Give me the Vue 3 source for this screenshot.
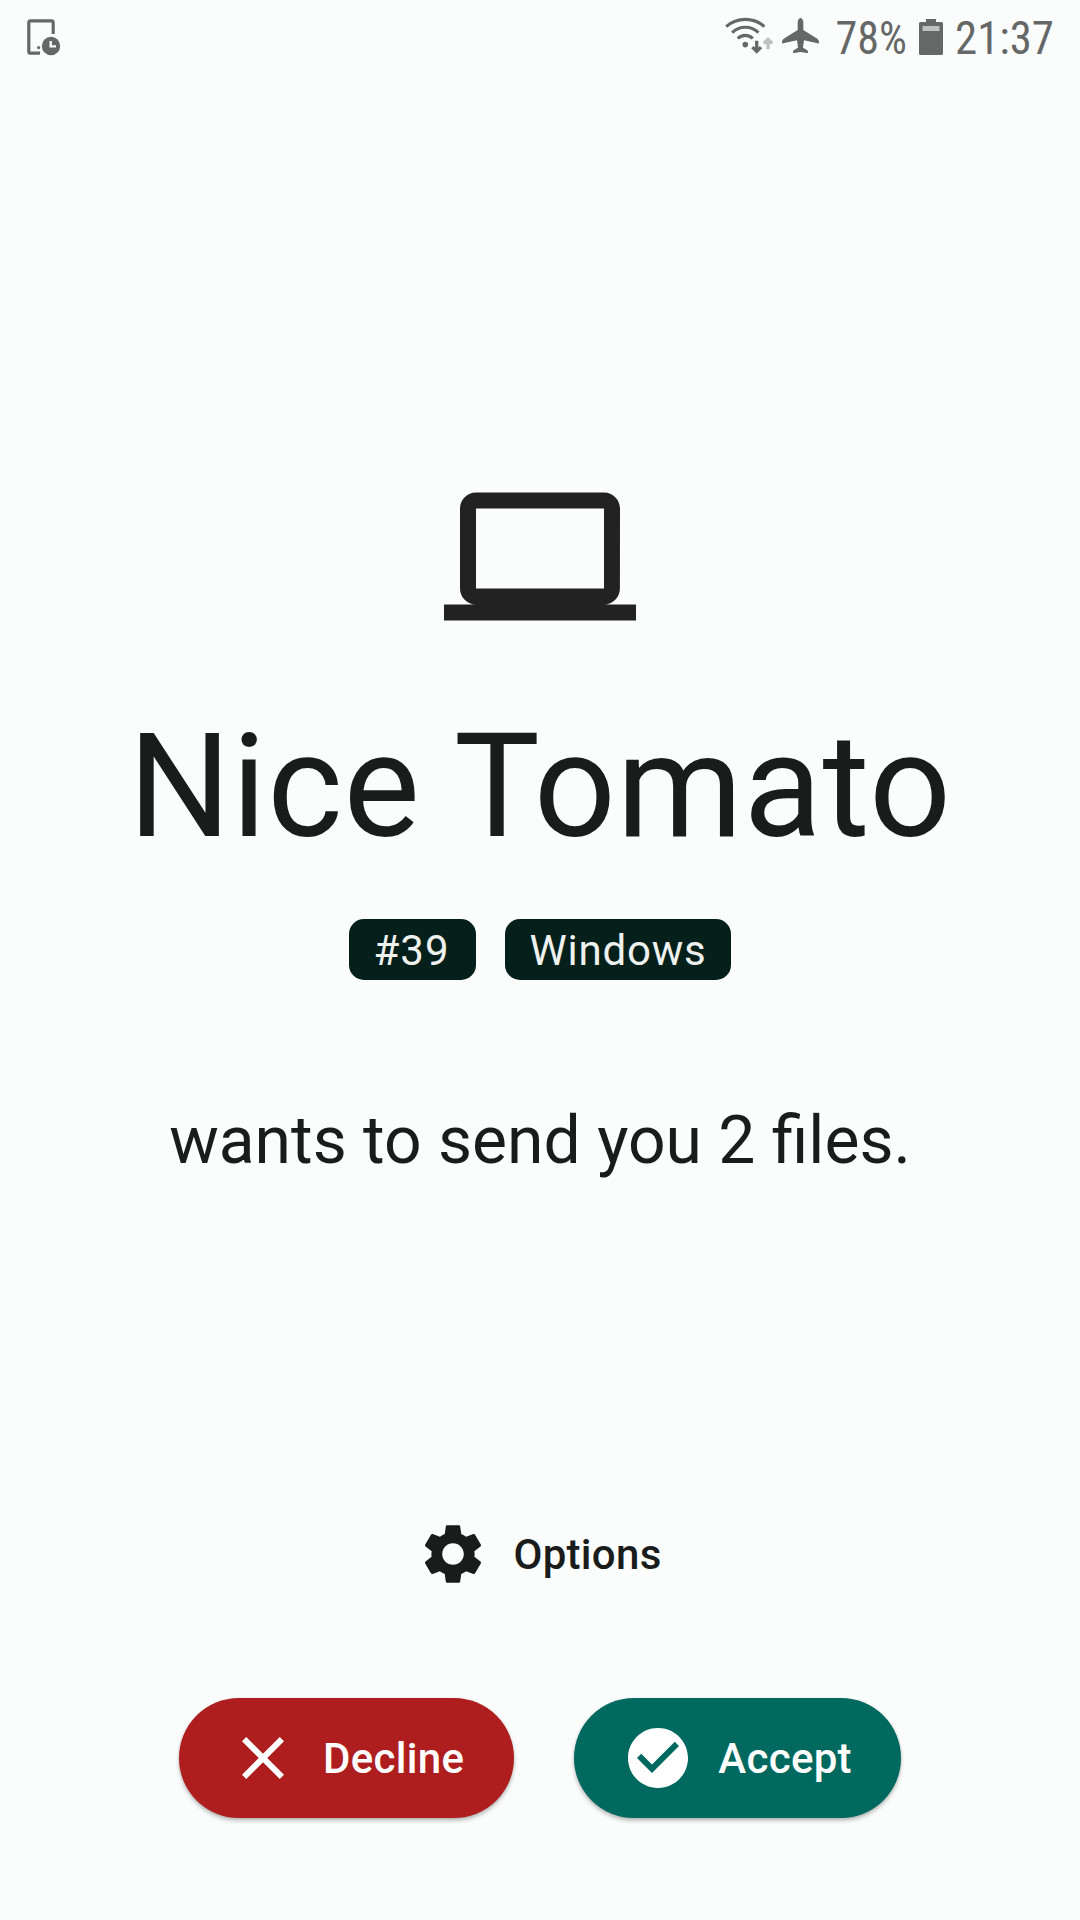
<script setup>
const badges = ['#39', 'Windows']
</script>

<template>
  <div class="screen">
    <header class="status">
      <svg class="device" width="36" height="38" viewBox="0 0 36 38">
        <path d="M26.2 15V3.6Q26.2 1.8 24.4 1.8H3.6Q1.8 1.8 1.8 3.6V32.4Q1.8 34.2 3.6 34.2H13" fill="none" stroke="currentColor" stroke-width="3.2" />
        <circle cx="11.6" cy="28.6" r="1.6" fill="currentColor" />
        <circle cx="24" cy="27" r="9.2" fill="currentColor" />
        <path d="M23.7 22V27.4H29" fill="none" stroke="#fbfdfc" stroke-width="2.4" />
      </svg>
      <div class="status-right">
        <svg width="50" height="38" viewBox="0 0 50 38" class="wifi">
          <g fill="none" stroke="currentColor" stroke-width="3.1">
            <path d="M1.2 9.6A29 29 0 0 1 39.4 9.6" />
            <path d="M7.2 15.7A18.5 18.5 0 0 1 33.4 15.7" />
            <path d="M12.8 21.5A10.500 10.5 0 0 1 27.8 21.5" />
          </g>
          <circle cx="20.3" cy="27.6" r="2.8" fill="currentColor" />
          <path d="M31.7 23.8V35.3M27.4 30.2L31.7 34.5L36 30.2" fill="none" stroke="currentColor" stroke-width="3.3" />
          <path d="M43 32.3V22M38.8 26.5L43 22.300L47.2 26.5" fill="none" stroke="#bfc1c0" stroke-width="3.3" />
        </svg>
        <svg width="37" height="35.3" viewBox="0 0 111 106" class="plane">
          <path d="M55.5 0C60 0 64 8 64 14V36L106 62Q111 66 111 71V74Q111 77 107 76L66 67L63 89L76 97Q78 99 78 102V104Q78 106 75 105L55.5 102L36 105Q33 106 33 104V102Q33 99 35 97L48 89L45 67L4 76Q0 77 0 74V71Q0 66 5 62L47 36V14C47 8 51 0 55.5 0Z" fill="currentColor" />
        </svg>
        <svg width="72" height="56" viewBox="0 0 72 56" class="percent">
          <text x="-0.6" y="40" textLength="71.5" lengthAdjust="spacingAndGlyphs">78%</text>
        </svg>
        <svg width="24" height="36" viewBox="0 0 24 36" class="battery">
          <path d="M7 0H17V3H22.5Q24 3 24 4.5V34.5Q24 36 22.5 36H1.5Q0 36 0 34.5V4.5Q0 3 1.5 3H7Z" fill="currentColor" />
          <path d="M3.5 7H20.5V12H3.5Z" fill="#bfc1c0" />
        </svg>
        <svg width="100" height="56" viewBox="0 0 100 56" class="clock">
          <text x="0" y="40" textLength="99" lengthAdjust="spacingAndGlyphs">21:37</text>
        </svg>
      </div>
    </header>

    <main class="sender">
      <svg class="laptop" width="192" height="192" viewBox="0 -0.05 24 24">
        <path d="M20 18c1.1 0 1.99-.9 1.99-2L22 6c0-1.1-.9-2-2-2H4c-1.1 0-2 .9-2 2v10c0 1.1.9 2 2 2H0v2h24v-2h-4zM4 6h16v10H4V6z" fill="#222" />
      </svg>
      <h1>Nice Tomato</h1>
      <div class="badges">
        <span v-for="badge in badges" :key="badge" class="badge">{{ badge }}</span>
      </div>
      <p class="message">wants to send you 2 files.</p>
    </main>

    <button class="options">
      <svg width="72" height="72" viewBox="0 0 24 24">
        <path fill="currentColor" d="M19.14 12.94c.04-.3.06-.61.06-.94 0-.32-.02-.64-.07-.94l2.03-1.58c.18-.14.23-.41.12-.61l-1.92-3.32c-.12-.22-.37-.29-.59-.22l-2.39.96c-.5-.38-1.03-.7-1.62-.94l-.36-2.54c-.04-.24-.24-.41-.48-.41h-3.84c-.24 0-.43.17-.47.41l-.36 2.54c-.59.24-1.13.57-1.62.94l-2.39-.96c-.22-.08-.47 0-.59.22L2.74 8.87c-.12.21-.08.47.12.61l2.03 1.58c-.05.3-.09.63-.09.94s.02.64.07.94l-2.03 1.58c-.18.14-.23.41-.12.61l1.92 3.32c.12.22.37.29.59.22l2.39-.96c.5.38 1.03.7 1.62.94l.36 2.54c.05.24.24.41.48.41h3.84c.24 0 .44-.17.47-.41l.36-2.54c.59-.24 1.13-.56 1.62-.94l2.39.96c.22.08.47 0 .59-.22l1.92-3.32c.12-.22.07-.47-.12-.61l-2.01-1.58zM12 15.6c-1.98 0-3.6-1.62-3.6-3.6s1.62-3.6 3.6-3.6 3.6 1.62 3.6 3.6-1.62 3.6-3.6 3.6z" />
      </svg>
      <span>Options</span>
    </button>

    <footer class="actions">
      <button class="action decline">
        <svg width="72" height="72" viewBox="0 0 24 24">
          <path fill="currentColor" d="M19 6.41L17.59 5 12 10.59 6.41 5 5 6.41 10.59 12 5 17.59 6.41 19 12 13.41 17.59 19 19 17.59 13.41 12z" />
        </svg>
        <span>Decline</span>
      </button>
      <button class="action accept">
        <svg width="72" height="72" viewBox="0 0 24 24">
          <path fill="currentColor" d="M12 2C6.48 2 2 6.48 2 12s4.48 10 10 10 10-4.48 10-10S17.52 2 12 2zm-2 15l-5-5 1.41-1.41L10 14.17l7.59-7.59L19 8l-9 9z" />
        </svg>
        <span>Accept</span>
      </button>
    </footer>
  </div>
</template>

<style>
body {
  margin: 0;
  background: #fbfdfc;
}
</style>

<style scoped>
.screen {
  box-sizing: border-box;
  width: 1080px;
  height: 1920px;
  display: flex;
  flex-direction: column;
  align-items: center;
  overflow: hidden;
  background: #fbfdfc;
  color: #191c1b;
  font-family: Roboto, "Liberation Sans", sans-serif;
}
svg {
  display: block;
  flex: none;
  overflow: visible;
}
.status {
  box-sizing: border-box;
  width: 100%;
  height: 72px;
  padding: 14px 25px 0 27px;
  display: flex;
  justify-content: space-between;
  align-items: flex-start;
  color: #666867;
}
.device {
  margin-top: 5px;
}
.status-right {
  display: flex;
  align-items: flex-start;
}
.status-right text {
  font-family: "Roboto Condensed", Roboto, sans-serif;
  font-size: 45.5px;
  fill: currentColor;
}
.wifi {
  margin: 3px 7px 0 0;
}
.plane {
  margin: 4px 17px 0 0;
}
.percent {
  margin-right: 11px;
}
.battery {
  margin: 5px 12px 0 0;
}
.sender {
  display: flex;
  flex-direction: column;
  align-items: center;
  margin-top: 388px;
}
h1 {
  margin: 51px 0 0;
  font-size: 144px;
  line-height: 168px;
  font-weight: 400;
  letter-spacing: 0.7px;
  white-space: nowrap;
}
.badges {
  display: flex;
  gap: 29.5px;
  margin-top: 48px;
}
.badge {
  box-sizing: border-box;
  min-width: 126.5px;
  padding: 2px 24px 0;
  height: 61px;
  line-height: 60px;
  border-radius: 15px;
  background: #051f1b;
  color: #eff1ef;
  font-size: 42px;
  letter-spacing: 0.8px;
}
.badge:first-child {
  letter-spacing: 1.1px;
}
.message {
  margin: 119px 0 0;
  font-size: 66px;
  line-height: 84px;
  white-space: nowrap;
}
button {
  border: 0;
  background: none;
  color: inherit;
  font: 500 42px/60px Roboto, "Liberation Sans", sans-serif;
  letter-spacing: 0.3px;
  display: flex;
  align-items: center;
  gap: 24.5px;
  padding: 0;
}
button span {
  padding: 2px 1.5px 0 0;
}
.options {
  height: 120px;
  margin-top: 311px;
}
.actions {
  display: flex;
  gap: 60px;
  margin-top: 84px;
}
.action {
  height: 120px;
  padding: 0 48px;
  border-radius: 60px;
  color: #fff;
  box-shadow: 0 3px 4px rgba(0, 0, 0, 0.22), 0 1px 3px rgba(0, 0, 0, 0.12);
}
.decline {
  background: #af1e1e;
}
.accept {
  background: #00695f;
}
</style>
